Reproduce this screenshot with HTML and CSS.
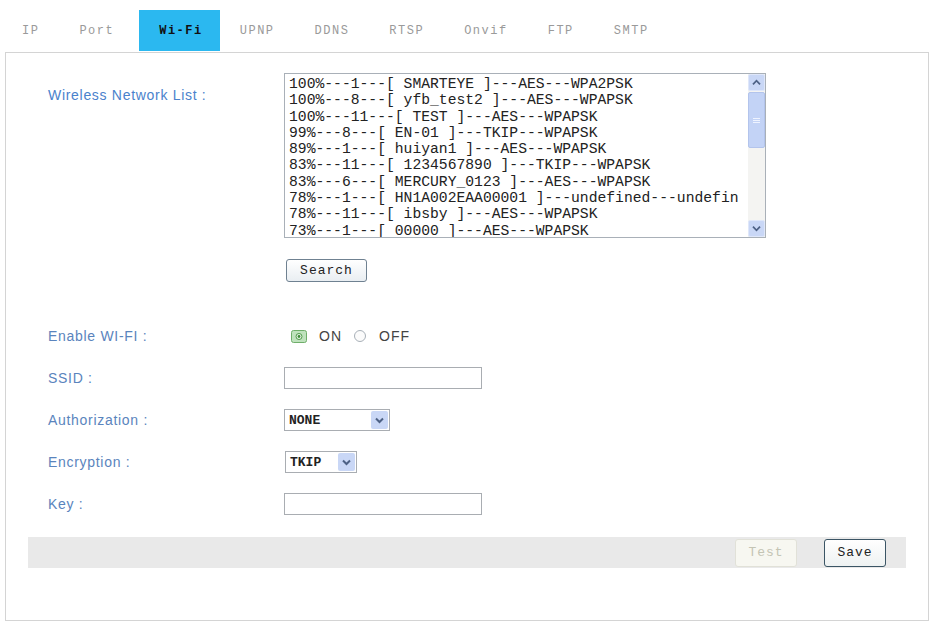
FILE: index.html
```html
<!DOCTYPE html>
<html lang="en">
<head>
<meta charset="UTF-8">
<meta name="viewport" content="width=device-width, initial-scale=1.0">
<title>Network Settings - Wi-Fi</title>
<link rel="stylesheet" href="styles.css">
</head>
<body>
  <div class="tabs">
    <a class="tab">IP</a>
    <a class="tab">Port</a>
    <a class="tab active">Wi-Fi</a>
    <a class="tab">UPNP</a>
    <a class="tab">DDNS</a>
    <a class="tab">RTSP</a>
    <a class="tab">Onvif</a>
    <a class="tab">FTP</a>
    <a class="tab">SMTP</a>
  </div>

  <div class="panel">
    <div class="list-row">
      <label class="label list-label">Wireless Network List :</label>
      <div class="list-col">
        <div class="listbox">
          <div class="list-items">
            <div class="item">100%---1---[ SMARTEYE ]---AES---WPA2PSK</div>
            <div class="item">100%---8---[ yfb_test2 ]---AES---WPAPSK</div>
            <div class="item">100%---11---[ TEST ]---AES---WPAPSK</div>
            <div class="item">99%---8---[ EN-01 ]---TKIP---WPAPSK</div>
            <div class="item">89%---1---[ huiyan1 ]---AES---WPAPSK</div>
            <div class="item">83%---11---[ 1234567890 ]---TKIP---WPAPSK</div>
            <div class="item">83%---6---[ MERCURY_0123 ]---AES---WPAPSK</div>
            <div class="item">78%---1---[ HN1A002EAA00001 ]---undefined---undefin</div>
            <div class="item">78%---11---[ ibsby ]---AES---WPAPSK</div>
            <div class="item">73%---1---[ 00000 ]---AES---WPAPSK</div>
          </div>
          <div class="scrollbar">
            <div class="sb-btn">
              <svg width="17" height="17" viewBox="0 0 17 17"><path d="M4.5 10.5 L8.5 6.5 L12.5 10.5" fill="none" stroke="#4d6185" stroke-width="2"/></svg>
            </div>
            <div class="sb-thumb">
              <svg width="9" height="9" viewBox="0 0 9 9"><path d="M1 2.5 H8 M1 4.5 H8 M1 6.5 H8" stroke="#eef3ff" stroke-width="1"/></svg>
            </div>
            <div class="sb-track"></div>
            <div class="sb-btn">
              <svg width="17" height="17" viewBox="0 0 17 17"><path d="M4.5 6.5 L8.5 10.5 L12.5 6.5" fill="none" stroke="#4d6185" stroke-width="2"/></svg>
            </div>
          </div>
        </div>
        <button class="btn search-btn">Search</button>
      </div>
    </div>

    <div class="form">
      <div class="form-row">
        <label class="label">Enable WI-FI :</label>
        <div class="radios">
          <span class="radio">
            <svg width="16" height="13" viewBox="0 0 16 13"><rect x="0.5" y="0.5" width="15" height="12" rx="2" fill="#bfe2bd" stroke="#6fae6a"/><circle cx="8" cy="6.5" r="3" fill="#eaf6e8" stroke="#4f9a4a"/><circle cx="8" cy="6.5" r="1.4" fill="#3d8a38"/></svg>
          </span>
          <span class="radio-text">ON</span>
          <span class="radio">
            <svg width="14" height="14" viewBox="0 0 14 14"><circle cx="7" cy="7" r="5.5" fill="#fbfbfb" stroke="#a8b0b8"/></svg>
          </span>
          <span class="radio-text">OFF</span>
        </div>
      </div>
      <div class="form-row">
        <label class="label">SSID :</label>
        <input type="text" class="text-input">
      </div>
      <div class="form-row">
        <label class="label">Authorization :</label>
        <div class="select select-wide">
          <span class="select-value">NONE</span>
          <span class="select-arrow">
            <svg width="17" height="18" viewBox="0 0 17 18"><path d="M5 7.5 L8.5 11 L12 7.5" fill="none" stroke="#4d6185" stroke-width="2"/></svg>
          </span>
        </div>
      </div>
      <div class="form-row">
        <label class="label">Encryption :</label>
        <div class="select select-narrow">
          <span class="select-value">TKIP</span>
          <span class="select-arrow">
            <svg width="17" height="18" viewBox="0 0 17 18"><path d="M5 7.5 L8.5 11 L12 7.5" fill="none" stroke="#4d6185" stroke-width="2"/></svg>
          </span>
        </div>
      </div>
      <div class="form-row">
        <label class="label">Key :</label>
        <input type="text" class="text-input">
      </div>
    </div>

    <div class="action-bar">
      <button class="btn test-btn" disabled>Test</button>
      <button class="btn save-btn">Save</button>
    </div>
  </div>
</body>
</html>
```

FILE: styles.css
```css
body {
  margin: 0;
  font-family: "Liberation Sans", Arial, sans-serif;
  background: #fff;
}

/* Tabs on top */
.tabs {
  display: flex;
  height: 41px;
  margin-top: 10px;
  padding-left: 2px;
}
.tab {
  display: flex;
  align-items: center;
  padding: 0 20px;
  font-family: "Liberation Mono", monospace;
  font-size: 12px;
  letter-spacing: 1.5px;
  color: #9a9a9a;
  cursor: pointer;
}
.tab.active {
  margin-left: 5px;
  padding: 0 17px 0 20px;
  background-color: #2bb8f0;
  color: #111;
  font-weight: bold;
}

/* Main panel */
.panel {
  width: 924px;
  box-sizing: border-box;
  margin: 1px 0 0 5px;
  border: 1px solid #d4d4d4;
  padding: 20px 22px 52px 22px;
}

.label {
  padding-left: 20px;
  font-size: 14px;
  line-height: 16px;
  letter-spacing: 0.7px;
  color: #5a84bd;
}

.list-row {
  display: grid;
  grid-template-columns: 256px auto;
  align-items: start;
}
.list-label {
  margin-top: 14px;
  color: #4a82cc;
}
.list-col {
  display: flex;
  flex-direction: column;
  align-items: flex-start;
}

/* Wireless list box */
.listbox {
  display: flex;
  width: 482px;
  height: 165px;
  box-sizing: border-box;
  border: 1px solid #a9b0b8;
  background: #fff;
}
.list-items {
  flex: 1;
  overflow: hidden;
  padding: 2px 0 0 4px;
}
.item {
  font-family: "Liberation Mono", monospace;
  font-size: 14.7px;
  line-height: 16.3px;
  color: #222;
  white-space: pre;
}
.scrollbar {
  width: 17px;
  display: flex;
  flex-direction: column;
  background: #f4f4f2;
}
.sb-btn {
  height: 17px;
  background: #c9d7f6;
  border: 1px solid #dfe7fa;
  box-sizing: border-box;
  border-radius: 2px;
  display: flex;
  align-items: center;
  justify-content: center;
}
.sb-thumb {
  height: 56px;
  margin-top: 1px;
  background: #c3d3f6;
  border: 1px solid #b3c4ec;
  box-sizing: border-box;
  border-radius: 2px;
  display: flex;
  align-items: center;
  justify-content: center;
}
.sb-track {
  flex: 1;
}

/* Buttons */
.btn {
  font-family: "Liberation Mono", monospace;
  font-size: 13px;
  letter-spacing: 1px;
  color: #222;
  border: 1px solid #6f8191;
  border-radius: 3px;
  background: linear-gradient(#ffffff, #e9eef2);
  cursor: pointer;
}
.search-btn {
  margin-top: 21px;
  margin-left: 2px;
  width: 81px;
  height: 23px;
}

/* Form rows */
.form {
  margin-top: 33px;
}
.form-row {
  display: grid;
  grid-template-columns: 256px auto;
  align-items: center;
  height: 42px;
}
.radios {
  display: flex;
  align-items: center;
  padding-left: 7px;
}
.radio {
  display: flex;
  align-items: center;
}
.radio-text {
  font-size: 14px;
  letter-spacing: 1px;
  color: #444;
  margin: 0 11px 0 12px;
}
.text-input {
  width: 198px;
  height: 22px;
  box-sizing: border-box;
  border: 1px solid #a9adb2;
  outline: none;
}

/* Fake select boxes */
.select {
  display: flex;
  align-items: center;
  justify-content: space-between;
  height: 22px;
  box-sizing: border-box;
  border: 1px solid #a9adb2;
  padding: 0 1px 0 4px;
  background: #fff;
}
.select-wide {
  width: 106px;
}
.select-narrow {
  width: 72px;
  margin-left: 1px;
}
.select-value {
  font-family: "Liberation Mono", monospace;
  font-size: 13px;
  font-weight: bold;
  color: #222;
}
.select-arrow {
  display: flex;
  width: 17px;
  height: 18px;
  background: #c9d7f6;
  border-radius: 2px;
}

/* Bottom bar */
.action-bar {
  margin-top: 12px;
  height: 31px;
  background: #e9e9e9;
  display: flex;
  justify-content: flex-end;
  align-items: center;
  gap: 27px;
  padding-right: 20px;
}
.test-btn {
  width: 62px;
  height: 28px;
  border-color: #e1e1d8;
  background: #f7f7f1;
  color: #c4c4b4;
  cursor: default;
}
.save-btn {
  width: 62px;
  height: 28px;
  border-color: #3b5565;
  background: linear-gradient(#ffffff, #eef2f2);
}
```
